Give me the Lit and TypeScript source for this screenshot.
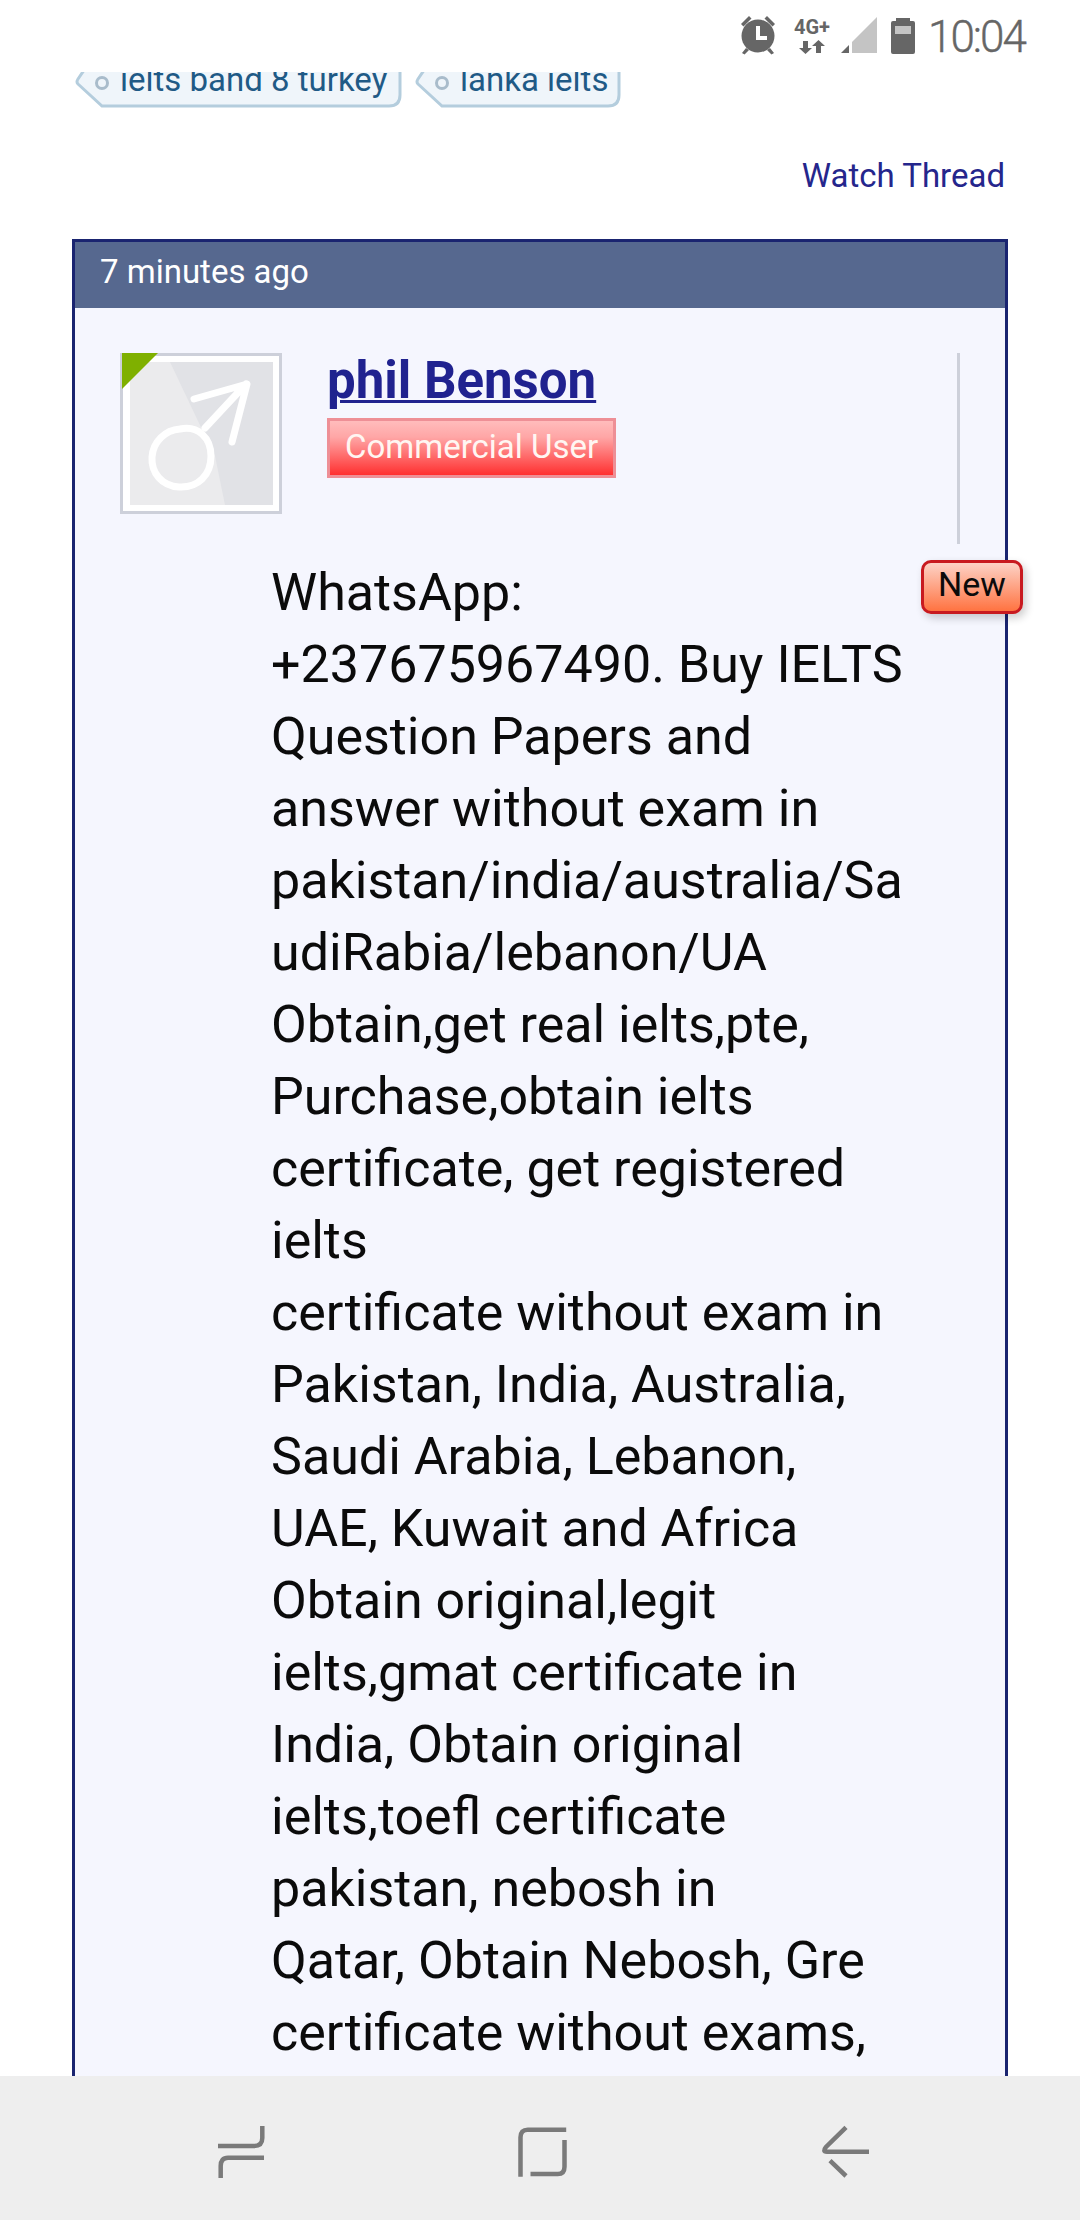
import { LitElement, html, css, svg } from "lit";
import { customElement } from "lit/decorators.js";

const LINES = [
  "WhatsApp:",
  "+237675967490. Buy IELTS",
  "Question Papers and",
  "answer without exam in",
  "pakistan/india/australia/Sa",
  "udiRabia/lebanon/UA",
  "Obtain,get real ielts,pte,",
  "Purchase,obtain ielts",
  "certificate, get registered",
  "ielts",
  "certificate without exam in",
  "Pakistan, India, Australia,",
  "Saudi Arabia, Lebanon,",
  "UAE, Kuwait and Africa",
  "Obtain original,legit",
  "ielts,gmat certificate in",
  "India, Obtain original",
  "ielts,toefl certificate",
  "pakistan, nebosh in",
  "Qatar, Obtain Nebosh, Gre",
  "certificate without exams,",
];

const TAGS = [
  { label: "ielts band 8 turkey", w: 328 },
  { label: "lanka ielts", w: 207 },
];

const tagShape = (w: number) => {
  const h = 49;
  const d = `M${w - 3} 0 V${h - 14} Q${w - 3} ${h - 3} ${w - 14} ${h - 3} H27 L3 ${h - 25} Q1 ${h - 27} 3 ${h - 30} L16 0`;
  return svg`<svg class="tag-shape" width=${w} height=${h} viewBox="0 0 ${w} ${h}">
    <path d=${d + " Z"} fill="#eff5fa"></path>
    <path d=${d} fill="none" stroke="#b4cddd" stroke-width="3"></path>
  </svg>`;
};

@customElement("app-root")
export class AppRoot extends LitElement {
  static styles = css`
    :host {
      display: flex;
      flex-direction: column;
      width: 1080px;
      height: 2220px;
      overflow: hidden;
      background: #fff;
      font-family: Roboto, "Liberation Sans", sans-serif;
      color: #0b0b0b;
    }
    .status {
      flex: none;
      height: 72px;
      background: #fff;
      position: relative;
      z-index: 2;
    }
    .time {
      position: absolute;
      left: 928px;
      top: 11px;
      font-size: 44px;
      line-height: 52px;
      font-weight: 300;
      letter-spacing: -2px;
      color: #666;
      -webkit-text-stroke: 0.4px #666;
    }
    .net {
      position: absolute;
      left: 794px;
      top: 17px;
      font-size: 20px;
      line-height: 20px;
      font-weight: 700;
      color: #666;
    }
    .icons {
      display: block;
      position: absolute;
      left: 0;
      top: 0;
    }
    main {
      flex: 1;
      min-height: 0;
      overflow: hidden;
    }
    .tags {
      display: flex;
      gap: 12px;
      margin: -12px 0 0 75px;
    }
    .tag {
      position: relative;
      height: 49px;
      box-sizing: border-box;
      padding-left: 45px;
      font-size: 33px;
      line-height: 40px;
      color: #1f5a86;
      white-space: nowrap;
    }
    .tag-shape {
      position: absolute;
      left: 0;
      top: 0;
    }
    .tag-dot {
      position: absolute;
      left: 20px;
      top: 16px;
      width: 14px;
      height: 14px;
      box-sizing: border-box;
      border: 3px solid #a9bccb;
      border-radius: 50%;
    }
    .tag span {
      position: relative;
    }
    .watch {
      margin: 43px 75px 0 0;
      text-align: right;
      font-size: 33px;
      line-height: 48px;
      color: #25268c;
    }
    .card {
      margin: 39px 0 0 72px;
      width: 936px;
      box-sizing: border-box;
      border: 3px solid #1a2470;
      border-bottom: 0;
      background: #f5f6fe;
      position: relative;
    }
    .card-head {
      height: 66px;
      box-sizing: border-box;
      padding-left: 25px;
      background: #56688f;
      color: #fff;
      font-size: 33px;
      line-height: 60px;
    }
    .post {
      padding: 45px 0 100px 45px;
    }
    .author {
      display: flex;
      height: 191px;
    }
    .avatar {
      display: block;
      flex: none;
    }
    .who {
      flex: 1;
      margin-left: 45px;
      border-right: 3px solid #cdd0da;
      margin-right: 45px;
    }
    .name {
      display: block;
      font-size: 51px;
      line-height: 56px;
      font-weight: 700;
      color: #20228f;
      text-decoration: underline;
      text-decoration-thickness: 3px;
    }
    .rank {
      display: inline-block;
      margin-top: 9px;
      height: 60px;
      box-sizing: border-box;
      padding: 0 15px;
      border: 3px solid #ee8f96;
      background: linear-gradient(#ffbcbc, #ffa6a6 30%, #ff3030);
      color: #fff6f2;
      font-size: 33px;
      line-height: 52px;
    }
    .new {
      position: absolute;
      left: 846px;
      top: 318px;
      width: 102px;
      height: 54px;
      box-sizing: border-box;
      border: 3px solid #c81a20;
      border-radius: 10px;
      background: linear-gradient(#fdd2c6, #ff7341);
      box-shadow: 3px 4px 8px rgba(0, 0, 0, 0.2);
      text-align: center;
      font-size: 34px;
      line-height: 42px;
      color: #0b0b0b;
    }
    .body {
      margin: 13px 0 0 151px;
      font-size: 52px;
      line-height: 72px;
      white-space: nowrap;
    }
    nav {
      flex: none;
      height: 144px;
      background: #eeeeee;
      box-sizing: border-box;
      padding: 48px 83px 0 90px;
      display: grid;
      grid-template-columns: repeat(3, 1fr);
      justify-items: center;
      align-items: start;
      position: relative;
      z-index: 2;
    }
    nav svg {
      display: block;
    }
    nav path {
      fill: none;
      stroke: #7a7a7a;
      stroke-width: 4.5;
    }
  `;

  render() {
    return html`
      <div class="status">
        <svg class="icons" width="920" height="72" viewBox="0 0 920 72">
          <g fill="#666">
            <circle cx="758" cy="36" r="16.5"></circle>
            <path d="M741 24l8-8 2.5 2.5-8 8zM775 24l-8-8-2.5 2.5 8 8zM746 48l-4 5 2.5 1.5 4.5-4.5zM770 48l4 5-2.5 1.5-4.5-4.5z"></path>
            <path d="M756 26h4v10h7v4h-11z" fill="#fff"></path>
            <path d="M803 42h5v7h4l-6.5 6-6.5-6h4zM816 54h5v-7h4l-6.5-6-6.5 6h4z" transform="translate(0 -1)"></path>
            <path d="M841 53l8-8v8z"></path>
            <path d="M852 53v-11l25-25v36z" fill="#c4c4c4"></path>
            <path d="M896 18h14v3h3q2 0 2 2v29q0 2-2 2h-20q-2 0-2-2v-29q0-2 2-2h3z"></path>
            <rect x="895" y="26" width="16" height="8" fill="#c4c4c4"></rect>
          </g>
        </svg>
        <div class="net">4G+</div>
        <div class="time">10:04</div>
      </div>
      <main>
        <div class="tags">
          ${TAGS.map(
            (t) => html`<div class="tag" style="width:${t.w}px">
              ${tagShape(t.w)}<i class="tag-dot"></i><span>${t.label}</span>
            </div>`
          )}
        </div>
        <div class="watch">Watch Thread</div>
        <section class="card">
          <div class="card-head">7 minutes ago</div>
          <div class="post">
            <div class="author">
              <svg class="avatar" width="162" height="161" viewBox="0 0 162 161">
                <rect x="1.5" y="1.5" width="159" height="158" fill="#fff" stroke="#cdd0da" stroke-width="3"></rect>
                <rect x="10" y="9" width="143" height="143" fill="#e1e2e6"></rect>
                <path d="M10 9h40l28 59 17 35 10 49H10z" fill="#ebebed"></path>
                <path d="M2 0h36L2 36z" fill="#7fb000"></path>
                <g fill="none" stroke="#fff" stroke-width="7" stroke-linecap="round" stroke-linejoin="round">
                  <path d="M60 76c18-4 31 9 31 27 0 19-13 32-32 31-17-1-28-14-27-30 1-15 13-27 28-28z"></path>
                  <path d="M85 75l41-44M74 46l53-15-15 58"></path>
                </g>
              </svg>
              <div class="who">
                <a class="name">phil Benson</a>
                <div class="rank">Commercial User</div>
              </div>
            </div>
            <div class="new">New</div>
            <div class="body">${LINES.map((l) => html`<div>${l}</div>`)}</div>
          </div>
        </section>
      </main>
      <nav>
        <svg width="60" height="60" viewBox="0 0 60 60">
          <path d="M51.3 2V14Q51.3 22 43 22H7M53 33.7H17Q9.7 33.7 9.7 42V54"></path>
        </svg>
        <svg width="60" height="60" viewBox="0 0 60 60">
          <path d="M53.2 5.7H14.8Q7.5 5.7 7.5 13.3V52.7M51.5 16V42.7Q51.5 50 44.8 50H17.5"></path>
        </svg>
        <svg width="60" height="60" viewBox="0 0 60 60">
          <path d="M30 3.3L10 23Q6 27.7 11 27.7H53M14 36.7L30 52"></path>
        </svg>
      </nav>
    `;
  }
}
